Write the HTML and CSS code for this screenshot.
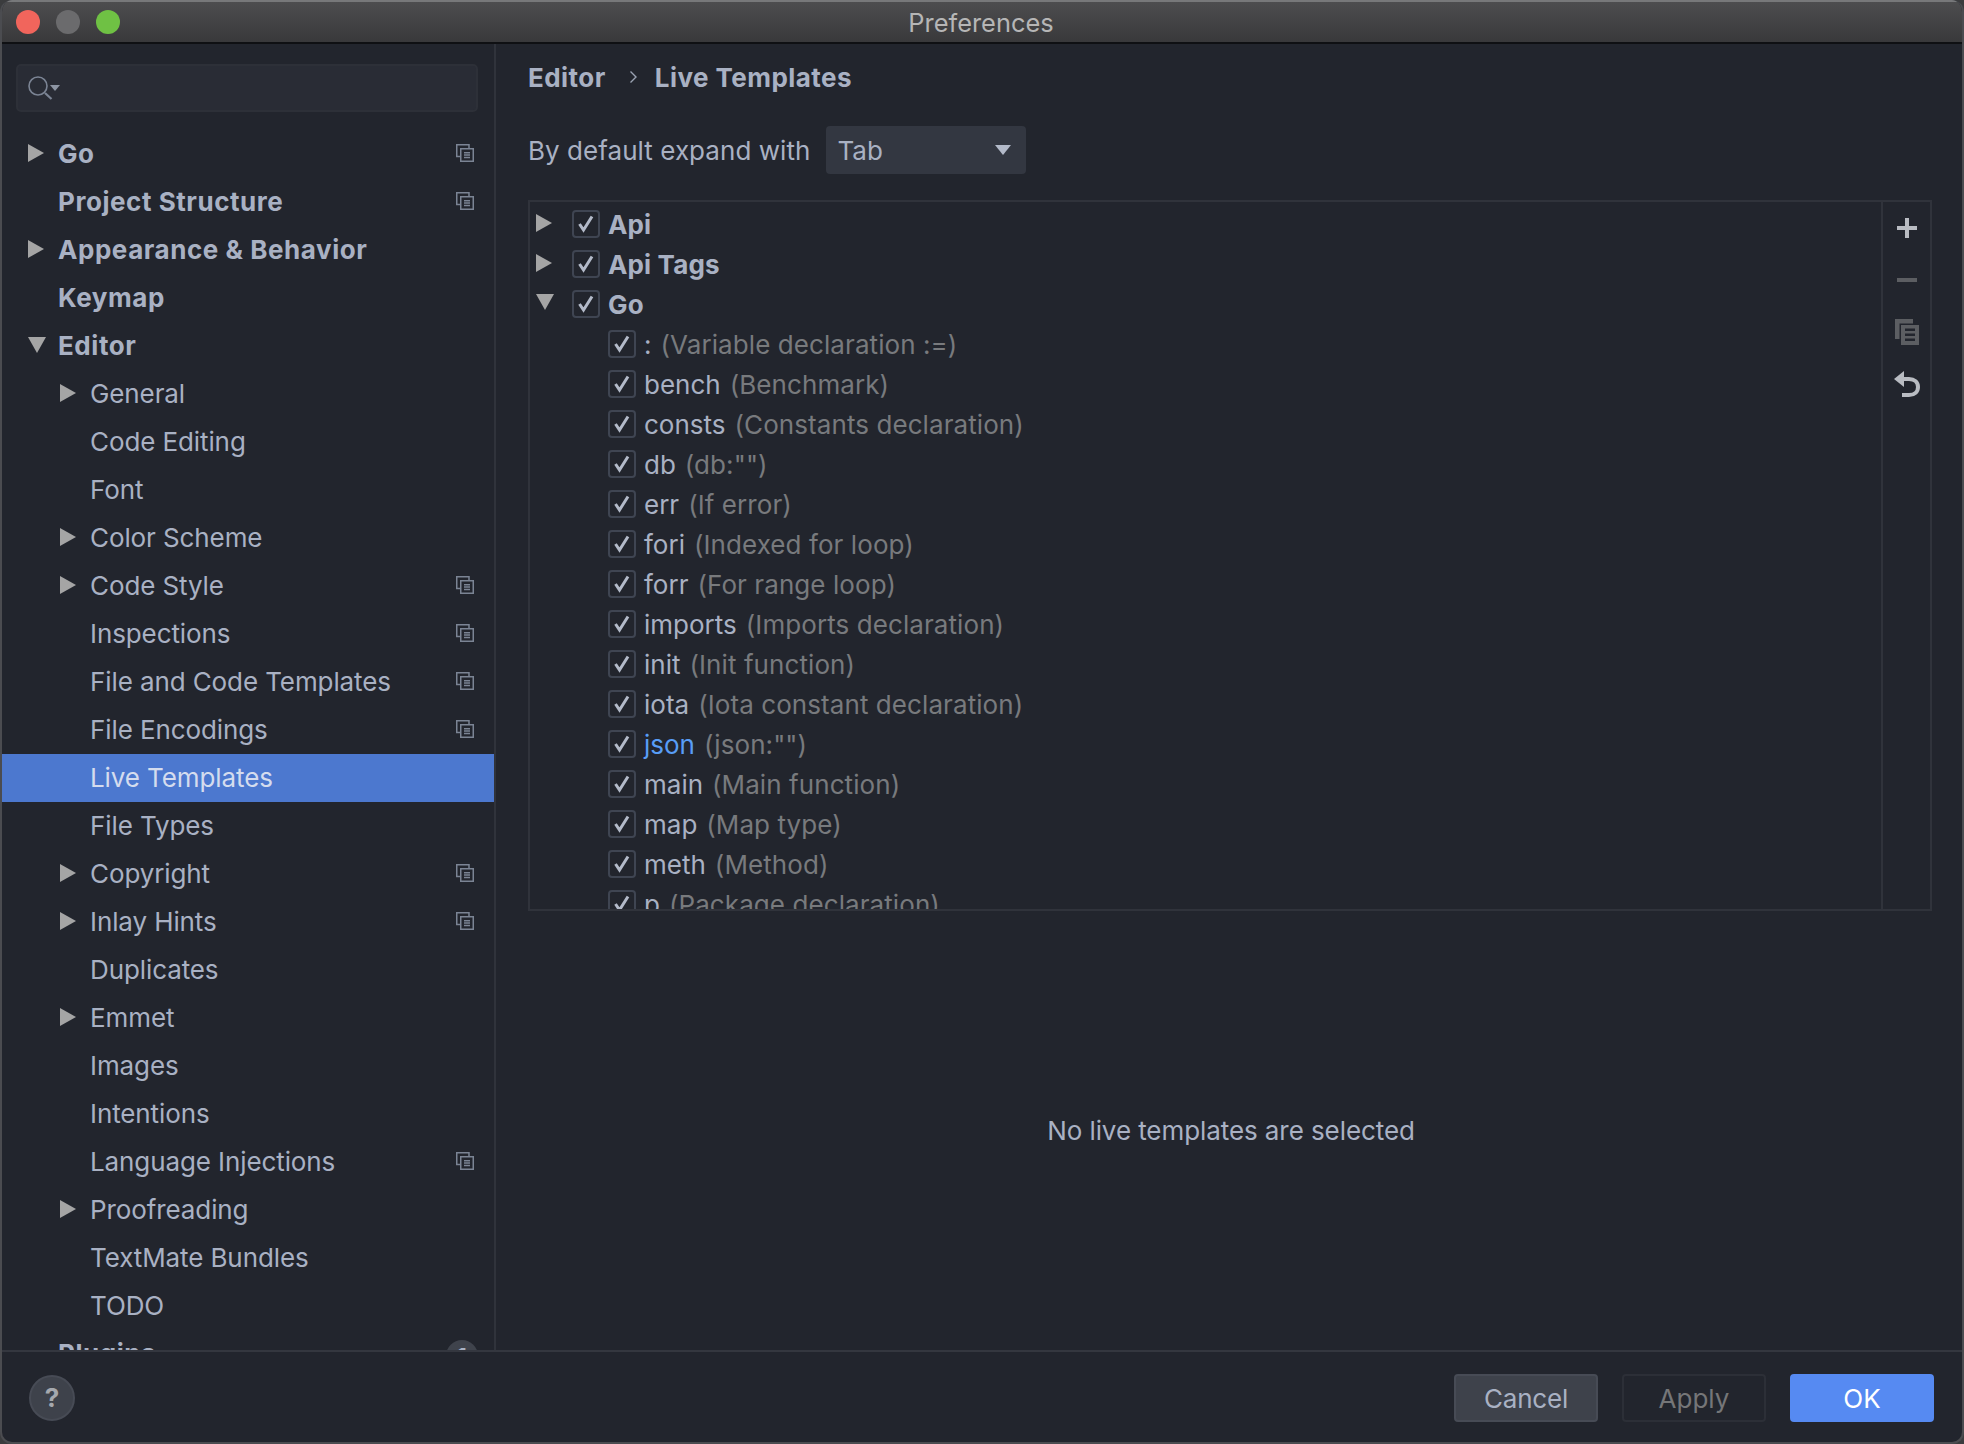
FILE: index.html
```html
<!doctype html>
<html lang="en">
<head>
  <meta charset="utf-8">
  <title>Preferences</title>
  <link rel="stylesheet" href="styles.css">
</head>
<body>
  <svg class="defs" width="0" height="0">
    <symbol id="arrowRight" viewBox="0 0 16 18"><path d="M0 0L16 9L0 18Z"/></symbol>
    <symbol id="arrowDown" viewBox="0 0 18 16"><path d="M0 0H18L9 16Z"/></symbol>
    <symbol id="copySmall" viewBox="0 0 18 18"><path d="M4 12.500H.75V.75H13V4M4.750 4.750H17.250V17.250H4.750ZM8 8.750H14M8 11H14M8 13.500H14" fill="none" stroke="#7b8494" stroke-width="1.500"/></symbol>
    <symbol id="tick" viewBox="2 2 24 24"><path d="M7.500 14L11.500 20L20 6.500" fill="none" stroke="#b3bac9" stroke-width="3"/></symbol>
  </svg>

  <div class="window">
    <header class="titlebar">
      <div class="lights">
        <span class="light light-close"></span>
        <span class="light light-min"></span>
        <span class="light light-max"></span>
      </div>
      <div class="title">Preferences</div>
    </header>

    <div class="main">
      <aside class="sidebar">
        <div class="search">
          <svg class="search-icon" width="34" height="26" viewBox="0 0 34 26">
            <circle cx="10" cy="10" r="9" fill="none" stroke="#7b8494" stroke-width="1.600"/>
            <path d="M17 17L23.500 23" stroke="#7b8494" stroke-width="2.200"/>
            <path d="M22 9H32L27 15Z" fill="#8d95a3"/>
          </svg>
        </div>
        <nav class="nav">
          <div class="nav-row top"><svg class="arrow"><use href="#arrowRight"/></svg><span>Go</span><svg class="copy"><use href="#copySmall"/></svg></div>
          <div class="nav-row top"><span>Project Structure</span><svg class="copy"><use href="#copySmall"/></svg></div>
          <div class="nav-row top"><svg class="arrow"><use href="#arrowRight"/></svg><span>Appearance &amp; Behavior</span></div>
          <div class="nav-row top"><span>Keymap</span></div>
          <div class="nav-row top"><svg class="arrow arrow-down"><use href="#arrowDown"/></svg><span>Editor</span></div>
          <div class="nav-row"><svg class="arrow"><use href="#arrowRight"/></svg><span>General</span></div>
          <div class="nav-row"><span>Code Editing</span></div>
          <div class="nav-row"><span>Font</span></div>
          <div class="nav-row"><svg class="arrow"><use href="#arrowRight"/></svg><span>Color Scheme</span></div>
          <div class="nav-row"><svg class="arrow"><use href="#arrowRight"/></svg><span>Code Style</span><svg class="copy"><use href="#copySmall"/></svg></div>
          <div class="nav-row"><span>Inspections</span><svg class="copy"><use href="#copySmall"/></svg></div>
          <div class="nav-row"><span>File and Code Templates</span><svg class="copy"><use href="#copySmall"/></svg></div>
          <div class="nav-row"><span>File Encodings</span><svg class="copy"><use href="#copySmall"/></svg></div>
          <div class="nav-row selected"><span>Live Templates</span></div>
          <div class="nav-row"><span>File Types</span></div>
          <div class="nav-row"><svg class="arrow"><use href="#arrowRight"/></svg><span>Copyright</span><svg class="copy"><use href="#copySmall"/></svg></div>
          <div class="nav-row"><svg class="arrow"><use href="#arrowRight"/></svg><span>Inlay Hints</span><svg class="copy"><use href="#copySmall"/></svg></div>
          <div class="nav-row"><span>Duplicates</span></div>
          <div class="nav-row"><svg class="arrow"><use href="#arrowRight"/></svg><span>Emmet</span></div>
          <div class="nav-row"><span>Images</span></div>
          <div class="nav-row"><span>Intentions</span></div>
          <div class="nav-row"><span>Language Injections</span><svg class="copy"><use href="#copySmall"/></svg></div>
          <div class="nav-row"><svg class="arrow"><use href="#arrowRight"/></svg><span>Proofreading</span></div>
          <div class="nav-row"><span>TextMate Bundles</span></div>
          <div class="nav-row"><span>TODO</span></div>
          <div class="nav-row top"><span>Plugins</span><b class="badge">1</b></div>
        </nav>
      </aside>

      <section class="content">
        <div class="crumbs">
          <span>Editor</span>
          <svg class="crumb-sep" width="9" height="14" viewBox="0 0 9 14"><path d="M1.500 1.500L7 7L1.500 12.500" fill="none" stroke="#9aa2b2" stroke-width="1.400"/></svg>
          <span>Live Templates</span>
        </div>

        <div class="expand">
          <label>By default expand with</label>
          <div class="select">Tab<svg width="16" height="10" viewBox="0 0 16 10"><path d="M0 0H16L8 10Z" fill="#b3bac9"/></svg></div>
        </div>

        <div class="tree-box">
          <div class="tree">
            <div class="tree-row group"><svg class="arrow"><use href="#arrowRight"/></svg><span class="check"><svg><use href="#tick"/></svg></span><span>Api</span></div>
            <div class="tree-row group"><svg class="arrow"><use href="#arrowRight"/></svg><span class="check"><svg><use href="#tick"/></svg></span><span>Api Tags</span></div>
            <div class="tree-row group"><svg class="arrow arrow-down"><use href="#arrowDown"/></svg><span class="check"><svg><use href="#tick"/></svg></span><span>Go</span></div>
            <div class="tree-row item"><span class="check"><svg><use href="#tick"/></svg></span><span>:</span><span class="desc">(Variable declaration :=)</span></div>
            <div class="tree-row item"><span class="check"><svg><use href="#tick"/></svg></span><span>bench</span><span class="desc">(Benchmark)</span></div>
            <div class="tree-row item"><span class="check"><svg><use href="#tick"/></svg></span><span>consts</span><span class="desc">(Constants declaration)</span></div>
            <div class="tree-row item"><span class="check"><svg><use href="#tick"/></svg></span><span>db</span><span class="desc">(db:"")</span></div>
            <div class="tree-row item"><span class="check"><svg><use href="#tick"/></svg></span><span>err</span><span class="desc">(If error)</span></div>
            <div class="tree-row item"><span class="check"><svg><use href="#tick"/></svg></span><span>fori</span><span class="desc">(Indexed for loop)</span></div>
            <div class="tree-row item"><span class="check"><svg><use href="#tick"/></svg></span><span>forr</span><span class="desc">(For range loop)</span></div>
            <div class="tree-row item"><span class="check"><svg><use href="#tick"/></svg></span><span>imports</span><span class="desc">(Imports declaration)</span></div>
            <div class="tree-row item"><span class="check"><svg><use href="#tick"/></svg></span><span>init</span><span class="desc">(Init function)</span></div>
            <div class="tree-row item"><span class="check"><svg><use href="#tick"/></svg></span><span>iota</span><span class="desc">(Iota constant declaration)</span></div>
            <div class="tree-row item"><span class="check"><svg><use href="#tick"/></svg></span><span class="link">json</span><span class="desc">(json:"")</span></div>
            <div class="tree-row item"><span class="check"><svg><use href="#tick"/></svg></span><span>main</span><span class="desc">(Main function)</span></div>
            <div class="tree-row item"><span class="check"><svg><use href="#tick"/></svg></span><span>map</span><span class="desc">(Map type)</span></div>
            <div class="tree-row item"><span class="check"><svg><use href="#tick"/></svg></span><span>meth</span><span class="desc">(Method)</span></div>
            <div class="tree-row item"><span class="check"><svg><use href="#tick"/></svg></span><span>p</span><span class="desc">(Package declaration)</span></div>
          </div>
          <div class="tools">
            <div class="tool"><svg width="20" height="20" viewBox="0 0 20 20"><path d="M8 0H12V8H20V12H12V20H8V12H0V8H8Z" fill="#b9bcc2"/></svg></div>
            <div class="tool"><svg width="20" height="4" viewBox="0 0 20 4"><path d="M0 0H20V4H0Z" fill="#5c5e62"/></svg></div>
            <div class="tool"><svg width="24" height="26" viewBox="0 0 24 26"><path d="M0 0H18V4.500H4.500V20H0Z" fill="#5c5e62"/><path fill-rule="evenodd" d="M6 6H24V26H6ZM10 9.500V12H20V9.500ZM10 14.500V17H20V14.500ZM10 19.500V22H20V19.500Z" fill="#5c5e62"/></svg></div>
            <div class="tool"><svg width="26" height="26" viewBox="0 0 26 26"><path d="M0 8L10 0V16Z" fill="#b9bcc2"/><path d="M8 8H15C20.500 8 24 11.500 24 16S20.500 24 15 24H8" fill="none" stroke="#b9bcc2" stroke-width="4"/></svg></div>
          </div>
        </div>

        <div class="empty">No live templates are selected</div>
      </section>
    </div>

    <footer class="footer">
      <div class="help">?</div>
      <div class="buttons">
        <button type="button" class="btn btn-cancel">Cancel</button>
        <button type="button" class="btn btn-apply">Apply</button>
        <button type="button" class="btn btn-ok">OK</button>
      </div>
    </footer>
  </div>
</body>
</html>
```

FILE: styles.css
```css
* {
  box-sizing: border-box;
}
html, body {
  margin: 0;
  background: #3b3c3e;
}
.defs {
  position: absolute;
}
.window {
  display: flex;
  flex-direction: column;
  width: 1964px;
  height: 1444px;
  overflow: hidden;
  border: 2px solid #4b4c50;
  border-top: 0;
  border-radius: 12px;
  background: #22252d;
  color: #a9b1c3;
  font-family: Inter, "Liberation Sans", sans-serif;
  font-size: 26px;
}
.titlebar {
  position: relative;
  display: flex;
  flex: none;
  align-items: center;
  justify-content: center;
  height: 44px;
  border-top: 2px solid #77787a;
  border-bottom: 2px solid #0f1013;
  background: linear-gradient(#4d4d4f, #39393b);
}
.lights {
  position: absolute;
  left: 14px;
  top: 8px;
  display: flex;
  gap: 16px;
}
.light {
  width: 24px;
  height: 24px;
  border-radius: 50%;
}
.light-close {
  background: #f1655c;
}
.light-min {
  background: #6b6b6d;
}
.light-max {
  background: #6fc144;
}
.title {
  padding-right: 2px;
  color: #b6b6b6;
  font-size: 25.400px;
}
.main {
  display: flex;
  flex: 1;
  min-height: 0;
}
.sidebar {
  display: flex;
  flex: none;
  flex-direction: column;
  width: 494px;
  border-right: 2px solid #30333b;
  padding-top: 20px;
}
.search {
  display: flex;
  flex: none;
  align-items: center;
  width: 462px;
  height: 48px;
  margin-left: 14px;
  padding: 2px 0 0 10px;
  border: 2px solid #2d3038;
  border-radius: 5px;
  background: #292c35;
}
.nav {
  flex: 1;
  min-height: 0;
  margin-top: 18px;
  overflow: hidden;
}
.nav-row {
  position: relative;
  display: flex;
  align-items: center;
  height: 48px;
  padding: 0 0 2px 88px;
  letter-spacing: -0.100px;
}
.nav-row.top {
  padding-left: 56px;
  font-weight: 700;
  letter-spacing: 0.550px;
}
.nav-row.selected {
  background: #4c78cf;
  color: #d4dcee;
}
.arrow {
  position: absolute;
  left: 58px;
  width: 16px;
  height: 18px;
  fill: #a5a5a5;
}
.top .arrow {
  left: 26px;
}
.arrow-down {
  width: 18px;
  height: 16px;
}
.copy {
  position: absolute;
  left: 454px;
  width: 18px;
  height: 18px;
}
.badge {
  position: absolute;
  left: 444px;
  top: 10px;
  width: 32px;
  height: 32px;
  border-radius: 50%;
  background: #3f434c;
  font-size: 20px;
  line-height: 32px;
  text-align: center;
}
.content {
  display: flex;
  flex: 1;
  flex-direction: column;
  min-width: 0;
  padding: 0 30px 0 32px;
}
.crumbs {
  display: flex;
  flex: none;
  align-items: center;
  height: 66px;
  font-weight: 700;
  letter-spacing: 0.450px;
}
.crumb-sep {
  margin: 0 17px 0 23px;
}
.expand {
  display: flex;
  flex: none;
  align-items: center;
  gap: 16px;
  height: 48px;
  margin-top: 16px;
  letter-spacing: 0.050px;
}
.select {
  display: flex;
  align-items: center;
  justify-content: space-between;
  width: 200px;
  height: 48px;
  padding: 0 15px 0 11px;
  border-radius: 4px;
  background: #333741;
}
.tree-box {
  display: flex;
  flex: none;
  height: 711px;
  margin-top: 26px;
  border: 2px solid #30333b;
}
.tree {
  flex: 1;
  min-width: 0;
  padding-top: 2px;
  overflow: hidden;
}
.tree-row {
  position: relative;
  display: flex;
  align-items: center;
  height: 40px;
}
.tree-row.group {
  padding-left: 42px;
  font-weight: 700;
  letter-spacing: 0.150px;
}
.tree-row.item {
  padding-left: 78px;
}
.tree-row .arrow {
  left: 6px;
  top: 10px;
}
.check {
  flex: none;
  width: 28px;
  height: 28px;
  margin-right: 8px;
  border: 2px solid #3f4552;
  border-radius: 4px;
}
.check svg {
  display: block;
  width: 24px;
  height: 24px;
}
.desc {
  margin-left: 9px;
  color: #787a7d;
  letter-spacing: 0.080px;
}
.link {
  color: #589df6;
}
.tools {
  flex: none;
  width: 49px;
  border-left: 2px solid #30333b;
}
.tool {
  display: flex;
  align-items: center;
  justify-content: center;
  height: 52px;
}
.empty {
  display: flex;
  flex: 1;
  align-items: center;
  justify-content: center;
  padding-left: 2px;
  letter-spacing: -0.080px;
}
.footer {
  display: flex;
  flex: none;
  align-items: flex-start;
  justify-content: space-between;
  height: 92px;
  padding: 22px 28px 0 27px;
  border-top: 2px solid #34373f;
}
.help {
  width: 46px;
  height: 46px;
  margin-top: 1px;
  border: 2px solid #474b55;
  border-radius: 50%;
  background: #3e424b;
  color: #a5a8ae;
  font-size: 26px;
  font-weight: 700;
  line-height: 42px;
  text-align: center;
}
.buttons {
  display: flex;
  gap: 24px;
}
.btn {
  width: 144px;
  height: 48px;
  border: 2px solid #22252d;
  border-radius: 4px;
  font-family: inherit;
  font-size: 26px;
}
.btn-cancel {
  border-color: #474b55;
  background: #3e424b;
  color: #a9b1c3;
  letter-spacing: -0.200px;
}
.btn-apply {
  border-color: #2c2f37;
  background: transparent;
  color: #757678;
}
.btn-ok {
  border-color: #568af2;
  background: #568af2;
  color: #fff;
}
```
